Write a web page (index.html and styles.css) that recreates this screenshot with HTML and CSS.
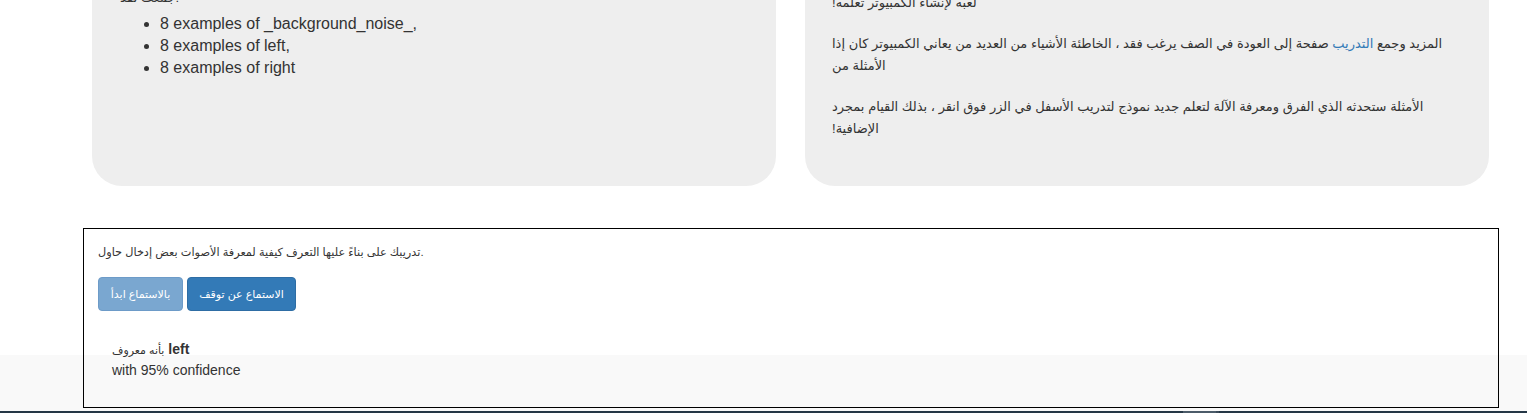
FILE: index.html
```html
<!DOCTYPE html>
<html lang="ar">
<head>
<meta charset="utf-8">
<title>Machine Learning for Kids</title>
<link rel="stylesheet" href="styles.css">
</head>
<body>
<div class="page">
  <div class="cards">
    <div class="card card-left">
      <p class="collected">لقد &lrm;جمعت:</p>
      <ul class="examples">
        <li>8 examples of _background_noise_,</li>
        <li>8 examples of left,</li>
        <li>8 examples of right</li>
      </ul>
    </div>
    <div class="card card-right">
      <p class="ar">!تعلمه &lrm;الكمبيوتر &lrm;لإنشاء &lrm;لعبه</p>
      <p class="ar">إذا &lrm;كان &lrm;الكمبيوتر &lrm;يعاني &lrm;من &lrm;العديد &lrm;من &lrm;الأشياء &lrm;الخاطئة &lrm;، &lrm;فقد &lrm;يرغب &lrm;الصف &lrm;في &lrm;العودة &lrm;إلى &lrm;صفحة &lrm;<a class="link" href="#">التدريب</a> &lrm;وجمع &lrm;المزيد &lrm;من &lrm;الأمثلة</p>
      <p class="ar">بمجرد &lrm;القيام &lrm;بذلك &lrm;، &lrm;انقر &lrm;فوق &lrm;الزر &lrm;في &lrm;الأسفل &lrm;لتدريب &lrm;نموذج &lrm;جديد &lrm;لتعلم &lrm;الآلة &lrm;ومعرفة &lrm;الفرق &lrm;الذي &lrm;ستحدثه &lrm;الأمثلة &lrm;<span class="nowrap">!الإضافية</span></p>
    </div>
  </div>
  <div class="band"></div>
  <div class="footer"><span class="footer-thumb"></span><span class="footer-edge"></span></div>
</div>

<div class="tester">
  <p class="tester-intro">حاول &lrm;إدخال &lrm;بعض &lrm;الأصوات &lrm;لمعرفة &lrm;كيفية &lrm;التعرف &lrm;عليها &lrm;بناءً &lrm;على &lrm;تدريبك.</p>
  <div class="tester-buttons">
    <button class="btn btn-disabled" disabled>ابدأ &lrm;بالاستماع</button>
    <button class="btn btn-primary">توقف &lrm;عن &lrm;الاستماع</button>
  </div>
  <div class="result">
    <div class="result-label"><span class="ar-small">معروف &lrm;بأنه</span> <strong>left</strong></div>
    <div class="result-confidence">with 95% confidence</div>
  </div>
</div>
</body>
</html>
```

FILE: styles.css
```css
html, body {
  margin: 0;
  padding: 0;
  background: #ffffff;
  overflow: hidden;
}

body {
  font-family: "Liberation Sans", "DejaVu Sans", Arial, sans-serif;
  font-size: 14px;
  line-height: 20px;
  color: #333333;
  position: relative;
  height: 413px;
}

.page {
  display: flex;
  flex-direction: column;
}

.cards {
  display: flex;
  gap: 29px;
  padding-left: 92px;
  margin-top: -74px;
}

.card {
  width: 684px;
  height: 260px;
  box-sizing: border-box;
  background: #eeeeee;
  border-radius: 30px;
}

.card-left {
  padding: 61px 28px 0 28px;
  font-size: 16px;
  line-height: 22px;
}

.collected {
  margin: 0;
  font-size: 13px;
}

.examples {
  margin: 4px 0 0 0;
  padding-left: 40px;
}

.card-right {
  padding: 66px 34px 0 27px;
}

.ar {
  margin: 0 0 19px 0;
  font-size: 13px;
  line-height: 22px;
}

.nowrap {
  white-space: nowrap;
}

.link {
  color: #337ab7;
  text-decoration: none;
}

.band {
  margin-top: 169px;
  height: 56px;
  background: #f9f9f9;
}

.footer {
  height: 10px;
  background: #253746;
  display: flex;
  padding-left: 1183px;
}

.footer-thumb {
  width: 33px;
  background: #4b5b69;
}

.footer-edge {
  width: 3px;
  background: #3a4a58;
}

.tester {
  position: absolute;
  left: 83px;
  top: 228px;
  width: 1414px;
  height: 178px;
  box-sizing: content-box;
  border: 1px solid #000000;
  padding: 0;
}

.tester-intro {
  margin: 13px 0 15px 14px;
  font-size: 11.3px;
  line-height: 20px;
}

.tester-buttons {
  display: flex;
  gap: 4px;
  padding-left: 14px;
}

.btn {
  font-family: "Liberation Sans", "DejaVu Sans", Arial, sans-serif;
  font-size: 11px;
  line-height: 20px;
  height: 34px;
  padding: 6px 4px;
  border-radius: 4px;
  color: #ffffff;
  box-sizing: border-box;
  white-space: nowrap;
  text-align: center;
}

.btn-disabled {
  background: #7aa7d0;
  border: 1px solid #6d9bc8;
  width: 85px;
}

.btn-primary {
  background: #337ab7;
  border: 1px solid #2e6da4;
  width: 109px;
}

.result {
  margin-top: 28px;
  padding-left: 28px;
}

.result-label .ar-small {
  font-size: 11px;
}

.result-label strong {
  font-weight: bold;
}
```
